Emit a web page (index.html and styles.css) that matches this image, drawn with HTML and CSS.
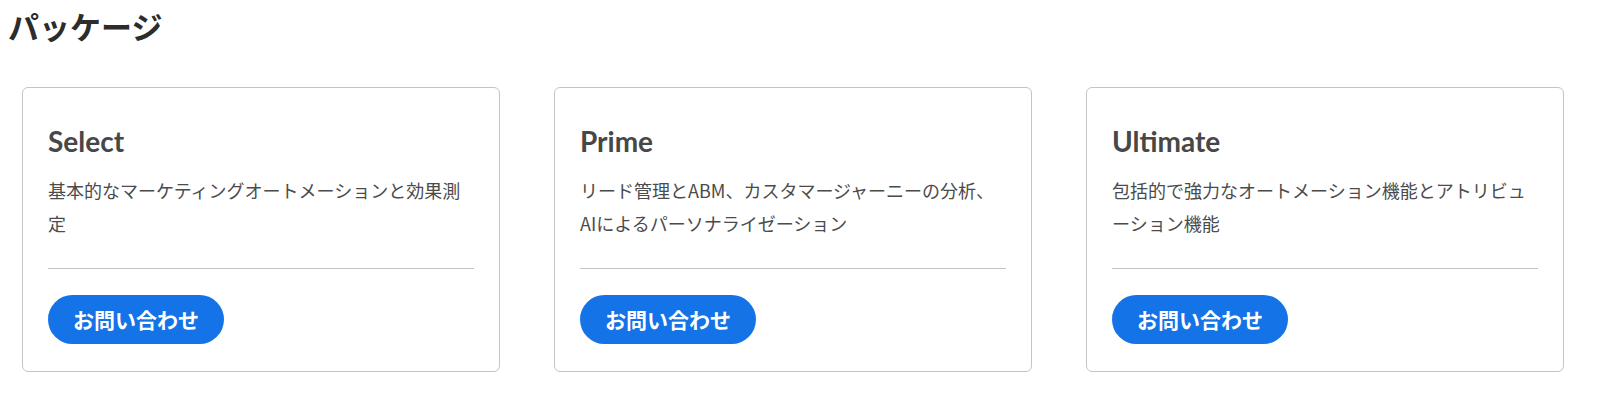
FILE: index.html
```html
<!DOCTYPE html>
<html lang="ja">
<head>
<meta charset="utf-8">
<title>パッケージ</title>
<link rel="stylesheet" href="styles.css">
</head>
<body>
  <h1 class="page-title">パッケージ</h1>
  <section class="packages">
    <article class="card">
      <h2 class="card-title">Select</h2>
      <p class="card-desc">基本的なマーケティングオートメーションと効果測定</p>
      <hr class="card-rule">
      <a class="card-btn" href="#">お問い合わせ</a>
    </article>
    <article class="card">
      <h2 class="card-title">Prime</h2>
      <p class="card-desc">リード管理とABM、カスタマージャーニーの分析、<br>AIによるパーソナライゼーション</p>
      <hr class="card-rule">
      <a class="card-btn" href="#">お問い合わせ</a>
    </article>
    <article class="card">
      <h2 class="card-title">Ultimate</h2>
      <p class="card-desc">包括的で強力なオートメーション機能とアトリビューション機能</p>
      <hr class="card-rule">
      <a class="card-btn" href="#">お問い合わせ</a>
    </article>
  </section>
</body>
</html>
```
FILE: styles.css
```css
html, body {
  background: #ffffff;
}
body {
  margin: 8px;
  font-family: "Lato", "Noto Sans CJK JP", sans-serif;
  color: #4b4b4b;
}
.page-title {
  margin: 0;
  font-family: "Noto Sans CJK JP", sans-serif;
  font-size: 31px;
  line-height: 36px;
  font-weight: 700;
  color: #2c2c2c;
}
.packages {
  margin: 43px 28px 0 14px;
  display: grid;
  grid-template-columns: repeat(3, 1fr);
  gap: 54px;
}
.card {
  border: 1px solid #c4c4c4;
  border-radius: 6px;
  padding: 36px 25px 27px;
  display: flex;
  flex-direction: column;
  align-items: flex-start;
}
.card-title {
  margin: 0;
  font-size: 28px;
  line-height: 34px;
  font-weight: 700;
  color: #474747;
}
.card-desc {
  margin: 16px 0 0;
  font-family: "Noto Sans CJK JP", sans-serif;
  font-size: 18px;
  line-height: 33px;
  color: #4b4b4b;
  min-height: 66px;
}
.card-rule {
  align-self: stretch;
  margin: 28px 0 0;
  border: 0;
  border-top: 1px solid #c4c4c4;
}
.card-btn {
  margin-top: 26px;
  height: 49px;
  padding: 0 25px;
  border-radius: 25px;
  background: #1473e6;
  color: #ffffff;
  font-family: "Noto Sans CJK JP", sans-serif;
  font-size: 21px;
  font-weight: 700;
  line-height: 49px;
  text-decoration: none;
  white-space: nowrap;
}
```
